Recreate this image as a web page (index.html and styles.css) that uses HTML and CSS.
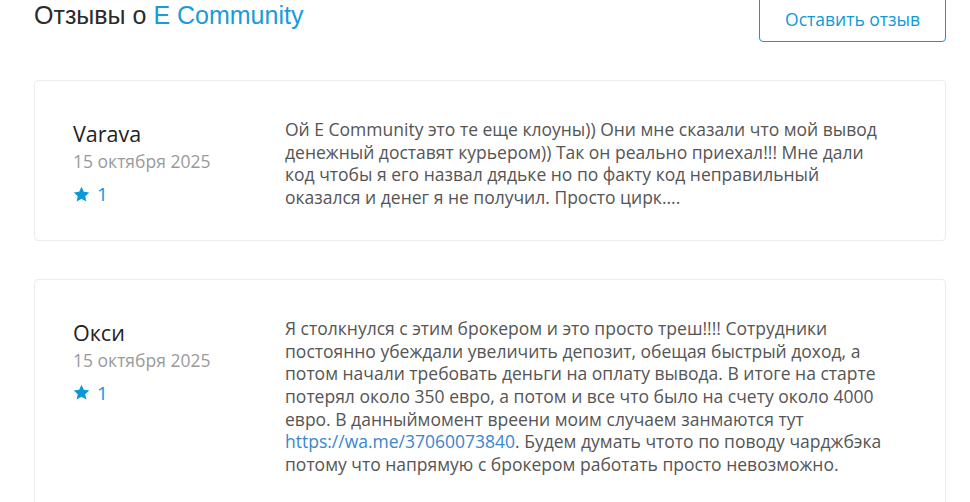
FILE: index.html
```html
<!DOCTYPE html>
<html lang="ru">
<head>
<meta charset="utf-8">
<title>Отзывы о E Community</title>
<link rel="stylesheet" href="styles.css">
</head>
<body>
<div class="page">
  <header class="head">
    <h1 class="title">Отзывы о <span class="brand">E Community</span></h1>
    <a class="btn" href="#">Оставить отзыв</a>
  </header>

  <section class="reviews">
    <article class="card">
      <div class="meta">
        <div class="name">Varava</div>
        <div class="date">15 октября 2025</div>
        <div class="rating">
          <svg class="star" viewBox="0 0 24 24" width="17" height="17" aria-hidden="true"><path d="M12 1.2l3.3 7 7.6.9-5.6 5.2 1.5 7.6L12 18.1l-6.8 3.8 1.5-7.6L1.1 9.1l7.6-.9z"/></svg>
          <span class="score">1</span>
        </div>
      </div>
      <p class="text">Ой E Community это те еще клоуны)) Они мне сказали что мой вывод денежный доставят курьером)) Так он реально приехал!!! Мне дали код чтобы я его назвал дядьке но по факту код неправильный оказался и денег я не получил. Просто цирк....</p>
    </article>

    <article class="card">
      <div class="meta">
        <div class="name">Окси</div>
        <div class="date">15 октября 2025</div>
        <div class="rating">
          <svg class="star" viewBox="0 0 24 24" width="17" height="17" aria-hidden="true"><path d="M12 1.2l3.3 7 7.6.9-5.6 5.2 1.5 7.6L12 18.1l-6.8 3.8 1.5-7.6L1.1 9.1l7.6-.9z"/></svg>
          <span class="score">1</span>
        </div>
      </div>
      <p class="text">Я столкнулся с этим брокером и это просто треш!!!! Сотрудники постоянно убеждали увеличить депозит, обещая быстрый доход, а потом начали требовать деньги на оплату вывода. В итоге на старте потерял около 350 евро, а потом и все что было на счету около 4000 евро. В данныймомент вреени моим случаем занмаются тут <a class="link" href="#">https://wa.me/37060073840</a>. Будем думать чтото по поводу чарджбэка потому что напрямую с брокером работать просто невозможно.</p>
    </article>
  </section>
</div>
</body>
</html>
```

FILE: styles.css
```css
* { box-sizing: border-box; }

html, body {
  margin: 0;
  padding: 0;
  background: #ffffff;
}

body {
  font-family: "Open Sans", "Liberation Sans", Arial, sans-serif;
  color: #555555;
}

.page {
  width: 912px;
  margin-left: 34px;
}

.head {
  display: flex;
  justify-content: space-between;
  align-items: center;
  margin-top: -4px;
  height: 46px;
}

.title {
  margin: 0 0 8px 0;
  font-family: "Liberation Sans", Arial, sans-serif;
  font-weight: normal;
  font-size: 25px;
  line-height: 30px;
  color: #2b2b2b;
}

.brand {
  color: #1b9bd8;
}

.btn {
  display: flex;
  align-items: center;
  justify-content: center;
  width: 187px;
  height: 46px;
  border: 1px solid #0e9ad8;
  border-radius: 4px;
  color: #0e9ad8;
  text-decoration: none;
  font-size: 17.5px;
}

.reviews {
  display: flex;
  flex-direction: column;
  gap: 38px;
  margin-top: 38px;
}

.card {
  display: flex;
  border: 1px solid #ececec;
  border-radius: 4px;
  padding: 37px 54px 31px 38px;
}

.meta {
  flex: 0 0 212px;
  padding-top: 2px;
}

.name {
  font-size: 21.5px;
  line-height: 28px;
  color: #222222;
}

.date {
  font-size: 17.5px;
  line-height: 27px;
  color: #9a9a9a;
}

.rating {
  display: flex;
  align-items: center;
  gap: 7px;
  margin-top: 5px;
  height: 28px;
  color: #0b97d8;
}

.star {
  fill: #0b97d8;
  display: block;
}

.score {
  font-size: 19px;
  line-height: 28px;
}

.text {
  flex: 1;
  margin: 0;
  font-size: 17.5px;
  line-height: 22.7px;
  color: #555555;
}

.link {
  color: #3a86cf;
  text-decoration: none;
}
```
